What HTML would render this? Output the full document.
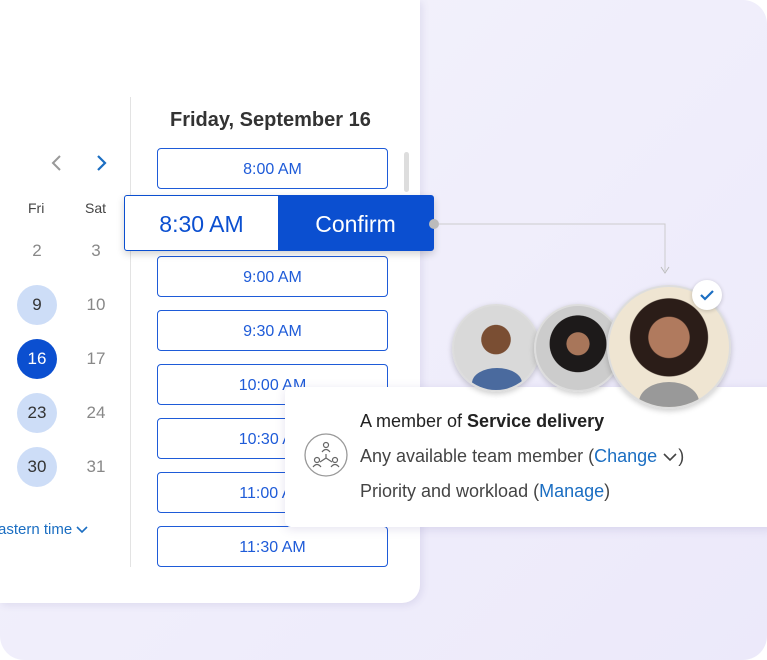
<!DOCTYPE html><html><head><style>
body{margin:0;width:767px;height:660px;overflow:hidden;font-family:"Liberation Sans",sans-serif;background:#fff}
.bg{position:absolute;left:0;top:0;width:767px;height:660px;border-radius:24px;background:linear-gradient(135deg,#f4f3fb,#efedfb 60%,#ece9fa)}
.card{position:absolute;left:0;top:0;width:420px;height:603px;background:#fff;border-radius:0 0 18px 0;box-shadow:2px 2px 8px rgba(80,70,150,.12)}
.slot{position:absolute;left:157px;width:229px;height:39px;border:1px solid #1e5bd8;border-radius:4px;background:#fff;text-align:center;line-height:42px;font-size:16px;color:#1e5bd8}
.d{position:absolute;width:40px;height:40px;border-radius:50%;text-align:center;line-height:40px;font-size:17px;color:#888}
.av{position:absolute;border-radius:50%;border:2px solid #ddd;box-shadow:0 2px 6px rgba(0,0,0,.2);overflow:hidden}
</style></head><body>
<div class="bg"></div>
<div class="card">
<div style="position:absolute;left:130px;top:97px;width:1px;height:470px;background:#e3e3e3"></div>
<div style="position:absolute;left:170px;top:109px;font-size:20px;font-weight:bold;color:#333">Friday, September 16</div>
<div style="position:absolute;left:404px;top:152px;width:5px;height:40px;border-radius:3px;background:#ddd"></div>
<svg style="position:absolute;left:48px;top:154px" width="60" height="18"><path d="M12 2 L5 9 L12 16" stroke="#999" stroke-width="2" fill="none"/><path d="M50 2 L57 9 L50 16" stroke="#1b6ec2" stroke-width="2.2" fill="none"/></svg>
<div style="position:absolute;left:28px;top:200px;font-size:14px;color:#444">Fri</div>
<div style="position:absolute;left:85px;top:200px;font-size:14px;color:#444">Sat</div>
<div class="d" style="left:17px;top:231px">2</div><div class="d" style="left:76px;top:231px">3</div>
<div class="d" style="left:17px;top:285px;background:#cdddf7;color:#333">9</div><div class="d" style="left:76px;top:285px">10</div>
<div class="d" style="left:17px;top:339px;background:#0b4fd0;color:#fff">16</div><div class="d" style="left:76px;top:339px">17</div>
<div class="d" style="left:17px;top:393px;background:#cdddf7;color:#333">23</div><div class="d" style="left:76px;top:393px">24</div>
<div class="d" style="left:17px;top:447px;background:#cdddf7;color:#333">30</div><div class="d" style="left:76px;top:447px">31</div>
<div style="position:absolute;left:-2px;top:521px;font-size:15px;color:#1b6ec2">astern time <svg width="12" height="8"><path d="M1 1 L6 6 L11 1" stroke="#1b6ec2" stroke-width="1.6" fill="none"/></svg></div>
<div class="slot" style="top:148px">8:00 AM</div>
<div class="slot" style="top:256px">9:00 AM</div>
<div class="slot" style="top:310px">9:30 AM</div>
<div class="slot" style="top:364px">10:00 AM</div>
<div class="slot" style="top:418px">10:30 AM</div>
<div class="slot" style="top:472px">11:00 AM</div>
<div class="slot" style="top:526px">11:30 AM</div>
</div>
<div style="position:absolute;left:124px;top:195px;width:308px;height:54px;border:1px solid #0b4fd0;border-radius:3px;background:#fff;box-shadow:0 3px 8px rgba(0,0,0,.18);display:flex">
<div style="width:153px;text-align:center;line-height:56px;font-size:23px;color:#0b4fd0">8:30 AM</div>
<div style="flex:1;background:#0b4fd0;text-align:center;line-height:56px;font-size:23px;color:#fff">Confirm</div></div>
<svg style="position:absolute;left:426px;top:216px" width="250" height="62"><circle cx="8" cy="8" r="5" fill="#bbb"/><path d="M13 8 H239 V55" stroke="#ccc" fill="none"/><path d="M235 51 L239 57 L243 51" stroke="#bbb" fill="none"/></svg>
<div style="position:absolute;left:285px;top:387px;width:490px;height:140px;background:#fff;border-radius:6px;box-shadow:0 2px 10px rgba(80,70,150,.15)">
<svg style="position:absolute;left:18px;top:45px" width="46" height="46"><circle cx="23" cy="23" r="21" stroke="#999" fill="none" stroke-width="1.3"/><g stroke="#666" fill="none" stroke-width="1.2"><circle cx="23" cy="13" r="2.5"/><path d="M19 20 Q23 15 27 20"/><circle cx="14" cy="28" r="2.5"/><path d="M10 35 Q14 30 18 35"/><circle cx="32" cy="28" r="2.5"/><path d="M28 35 Q32 30 36 35"/><path d="M23 22 V26 L17 30 M23 26 L29 30"/></g></svg>
<div style="position:absolute;left:75px;top:17px;font-size:18px;color:#222;line-height:35px">A member of <b>Service delivery</b><br><span style="color:#444">Any available team member (<span style="color:#1b6ec2">Change</span> <svg width="16" height="10"><path d="M2 2 L8 8 L14 2" stroke="#444" stroke-width="1.6" fill="none"/></svg>)</span><br><span style="color:#444">Priority and workload (<span style="color:#1b6ec2">Manage</span>)</span></div>
</div>
<div class="av" style="left:452px;top:304px;width:84px;height:84px;background:radial-gradient(circle at 50% 40%,#7a4e33 0 22%,#d9d9d9 23%);"><div style="position:absolute;left:18px;top:62px;width:50px;height:30px;border-radius:50%;background:#4a6a9e"></div></div>
<div class="av" style="left:534px;top:304px;width:84px;height:84px;background:radial-gradient(circle at 50% 45%,#a8765a 0 18%,#1d1a1a 19% 45%,#ccc 46%)"></div>
<div class="av" style="left:607px;top:285px;width:120px;height:120px;background:radial-gradient(circle at 50% 42%,#b07a5e 0 22%,#2b1d18 23% 42%,#efe5d2 43%)"><div style="position:absolute;left:30px;top:95px;width:60px;height:40px;border-radius:50%;background:#999"></div></div>
<div style="position:absolute;left:692px;top:280px;width:30px;height:30px;border-radius:50%;background:#fff;box-shadow:0 1px 4px rgba(0,0,0,.2)"><svg width="30" height="30"><path d="M9 15 L13 19 L21 11" stroke="#1b6ec2" stroke-width="2.2" fill="none"/></svg></div>
</body></html>
